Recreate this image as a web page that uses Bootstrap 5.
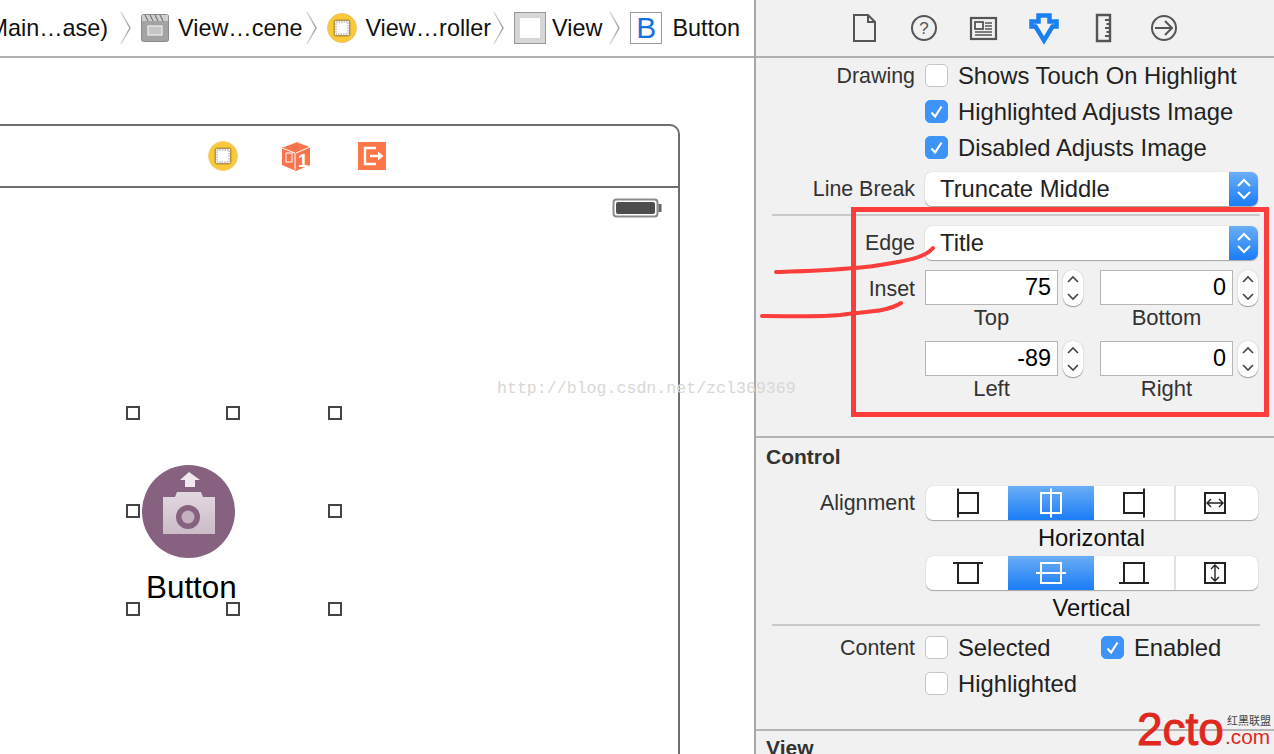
<!doctype html>
<html lang="en">
<head>
<meta charset="utf-8">
<title>Interface Builder</title>
<link href="https://cdn.jsdelivr.net/npm/bootstrap@5.3.0/dist/css/bootstrap.min.css" rel="stylesheet">
<style>
html,body{height:754px;overflow:hidden;background:#fff}
body{font-family:"Liberation Sans",Arial,sans-serif;font-size:21.4px;color:#111;line-height:1.2}
.app{width:1274px;height:754px;position:relative;overflow:hidden}
.designer{width:756px;height:754px;border-right:2px solid #a8a8a8;overflow:hidden;background:#fff;position:relative}
.crumbs{height:58px;border-bottom:2px solid #b0b0b0;padding-right:14px;white-space:nowrap;font-size:23.4px}
.crumbs svg{flex:none}
.crumb-gap{margin:0 10px}
.crumb-icon{margin-right:9px}
.gap-m{margin-left:12px}.gap-s{margin-left:4px}.gap-r{margin-left:2px}.gap-v{margin-left:7px}
.icon-c{margin-right:8px}
.icon-v{margin-right:6px}
.bicon{flex:none;width:32px;height:32px;border:1px solid #9a9a9a;color:#1470e0;font-size:30px;margin-right:10px;line-height:30px;background:#fff}
.scene{width:700px;height:640px;margin:66px 0 0 -20px;border:2px solid #6e6e6e;border-bottom:0;border-radius:0 10px 0 0}
.scene-bar{height:62px;border-bottom:2px solid #6e6e6e;gap:44px;padding-left:226px}
.cube-icon{margin-left:-1px}
.exit-icon{margin-left:3px}
.batt{position:absolute;left:612px;top:198px}
.handle{position:absolute;width:14px;height:14px;border:2px solid #444;background:#fff}
.hx1{left:126px}.hx2{left:226px}.hx3{left:328px}
.hy1{top:406px}.hy2{top:504px}.hy3{top:602px}
.cam{position:absolute;left:142px;top:465px}
.btn-title{position:absolute;left:146px;top:570px;font-size:31.4px;line-height:36px;color:#000}
.inspector{width:518px;height:754px;background:#f1f1f1;color:#333}
.tools{height:58px;border-bottom:2px solid #b0b0b0;padding-left:96px;gap:36px}
.tools svg{flex:none;width:24px;height:30px;overflow:visible}
.prow{display:grid;grid-template-columns:159px 1fr;column-gap:10px;align-items:center}
.prow>label,.plabel{text-align:right;color:#333;white-space:nowrap;padding-top:1px}
.checkline{height:36px}
.prow>label.chk,.chk{display:flex;align-items:center;gap:10px;color:#222;white-space:nowrap;margin:0;font-size:23.8px;text-align:left;padding-top:0}
.chk .form-check-input{width:23px;height:23px;margin:0;border:1px solid #c4c4c4;border-radius:5px;background-color:#fff;flex:none;box-shadow:none;float:none}
.chk .form-check-input:checked{background-color:#3d94f6;border-color:#3d94f6;background-image:url("data:image/svg+xml,%3Csvg xmlns='http://www.w3.org/2000/svg' viewBox='0 0 23 23'%3E%3Cpath d='M6 12.500l4 4.500 7-11' fill='none' stroke='%23fff' stroke-width='2.400'/%3E%3C/svg%3E")}
.popup{height:34px;width:333px;background:#fff;border-radius:7px;box-shadow:0 1px 1px #a5a5a5,0 0 1px #b5b5b5;overflow:hidden;color:#222;padding-left:15px;font-size:23.8px}
.popup-arrows{width:29px;height:34px;background:linear-gradient(#6aaef5,#1a7cf7)}
.rule{height:2px;background:#c9c9c9;margin-left:16px;margin-right:14px}
.line-rule{height:2px;background:#b4b4b4}
.fields .form-control{height:35px;border:1px solid #b5b5b5;border-radius:0;padding:0 6px 0 0;text-align:right;font-size:23.4px;color:#000;background:#fff;box-shadow:none;font-family:inherit}
.fcell{display:flex;gap:5px}
.fcell input{width:133px;flex:none}
.stepper{width:20px;height:36px;flex:none;background:#fff;border-radius:9px;box-shadow:0 1px 1px #999,0 0 1px #aaa}
.sub{text-align:center;width:133px;color:#333;font-size:22px;line-height:24px}
.fieldgrid{display:grid;grid-template-columns:158px 158px;column-gap:17px;width:333px}
.secthead{font-weight:700;font-size:21px;line-height:25px;color:#333;padding-left:10px}
.segs{width:332px;height:34px;margin-left:1px;background:#fff;border-radius:7px;box-shadow:0 1px 1px #a5a5a5,0 0 1px #b5b5b5;overflow:hidden}
.segs .btn{padding:0;border:0;border-radius:0;background:transparent;height:34px;display:flex;align-items:center;justify-content:center;flex:none}
.segs .btn:nth-child(1){width:83px}
.segs .btn:nth-child(2){width:86px;background:linear-gradient(#6aaef5,#1a7cf7)}
.segs .btn:nth-child(3){width:83px;border-right:2px solid #e2e2e2}
.segs .btn:nth-child(4){width:80px}
.caption{width:333px;height:28px;line-height:28px;text-align:center;color:#111;font-size:23.8px;margin-top:4px}
.redbox{position:absolute;left:851px;top:207px;width:418px;height:210px;border:5px solid #fb3d3c;pointer-events:none}
.scribble{position:absolute;left:0;top:0;pointer-events:none}
.wm{position:absolute;left:497px;top:378px;font-family:"Liberation Mono","Courier New",monospace;font-size:16.6px;line-height:22px;color:#d8d8d4;white-space:nowrap}
.logo{position:absolute;left:1132px;top:702px;width:142px;height:52px;color:#e0281f}
.logo-main{position:absolute;left:5px;top:4px;font-family:"Liberation Sans",sans-serif;font-weight:400;font-size:46px;line-height:46px;-webkit-text-stroke:1px #e0281f}
.logo-cn{position:absolute;left:95px;top:13px;font-family:"Noto Sans CJK SC",sans-serif;font-size:11px;line-height:10px;color:#444;white-space:nowrap}
.logo-com{position:absolute;left:93px;top:26px;font-family:"Liberation Sans",sans-serif;font-size:20.8px;line-height:17px;white-space:nowrap}
.edge-row{margin-top:10px}
.break-row{margin-top:6px}
.inset-row{margin-top:10px}
.prow>.inset-label{padding-top:7px}
.mt-row{margin-top:11px}
.section-a{margin-top:35px}
.section-title{margin-top:6px}
.align-row{margin-top:17px}
.seg2-row{margin-top:4px}
.rule-c{margin-top:2px}
.content-row{margin-top:4px}
.content-a{width:176px}
.section-b{margin-top:27px}
.section-view{margin-top:4px}
.defs{position:absolute;width:0;height:0}
</style>
</head>
<body>
<svg class="defs" aria-hidden="true"><defs><linearGradient id="cg" x1="0" y1="0" x2="0" y2="1"><stop offset="0" stop-color="#ddd"/><stop offset=".5" stop-color="#999"/><stop offset="1" stop-color="#ddd"/></linearGradient><linearGradient id="bodyg" x1="0" y1="0" x2="0" y2="1"><stop offset="0" stop-color="#e2d8e0"/><stop offset="1" stop-color="#cbbcc8"/></linearGradient></defs></svg>
<div class="app d-flex">
  <main class="designer flex-shrink-0">
    <div class="crumbs d-flex align-items-center justify-content-end">
      <span>Main…ase)</span>
      <svg class="crumb-gap gap-m" width="11" height="34" viewBox="0 0 11 34"><path d="M1 1 10 17 1 33" fill="none" stroke="url(#cg)" stroke-width="1.400"/></svg>
      <svg class="crumb-icon" width="28" height="28" viewBox="0 0 28 28"><rect x=".5" y=".5" width="27" height="27" rx="2" fill="#a3a3a3" stroke="#8a8a8a"/><rect x="1" y="1" width="26" height="6" fill="#cfcfcf"/><path d="M4 1l3 6M9 1l3 6M14 1l3 6M19 1l3 6" stroke="#777" stroke-width="1.200"/><rect x="7" y="12" width="14" height="9" fill="#c4c4c4" stroke="#eee" stroke-width="1.200"/></svg>
      <span>View…cene</span>
      <svg class="crumb-gap gap-s" width="11" height="34" viewBox="0 0 11 34"><path d="M1 1 10 17 1 33" fill="none" stroke="url(#cg)" stroke-width="1.400"/></svg>
      <svg class="crumb-icon icon-c" width="30" height="30" viewBox="0 0 30 30"><circle cx="15" cy="15" r="14.500" fill="#fbc837" stroke="#eec56a"/><rect x="6.500" y="6.500" width="17" height="17" rx="3" fill="#b2954a"/><rect x="8" y="8" width="14" height="14" fill="#fff"/><rect x="9" y="9" width="12" height="12" fill="none" stroke="#a99" stroke-dasharray="1.500 1"/></svg>
      <span>View…roller</span>
      <svg class="crumb-gap gap-r" width="11" height="34" viewBox="0 0 11 34"><path d="M1 1 10 17 1 33" fill="none" stroke="url(#cg)" stroke-width="1.400"/></svg>
      <svg class="crumb-icon icon-v" width="32" height="32" viewBox="0 0 32 32"><rect x=".5" y=".5" width="31" height="31" fill="#d6d6d6" stroke="#999"/><rect x="6" y="6" width="20" height="20" fill="#fff"/></svg>
      <span>View</span>
      <svg class="crumb-gap gap-v" width="11" height="34" viewBox="0 0 11 34"><path d="M1 1 10 17 1 33" fill="none" stroke="url(#cg)" stroke-width="1.400"/></svg>
      <span class="bicon d-flex align-items-center justify-content-center">B</span>
      <span>Button</span>
    </div>
    <div class="scene">
      <div class="scene-bar d-flex align-items-center">
        <svg width="30" height="30" viewBox="0 0 30 30"><circle cx="15" cy="15" r="14.500" fill="#fbc837" stroke="#f0d080"/><rect x="6.500" y="6.500" width="17" height="17" rx="3" fill="#b2954a"/><rect x="8" y="8" width="14" height="14" fill="#fff"/><rect x="9" y="9" width="12" height="12" fill="none" stroke="#a99" stroke-dasharray="1.500 1"/></svg>
        <svg class="cube-icon" width="30" height="30" viewBox="0 0 30 30"><path d="M15 1 29 6V24L15 30 1 24V6Z" fill="#f9734c"/><path d="M1 7 14 12V29M15 12 29 6M15 1 2 6" fill="none" stroke="#fff" stroke-width="1"/><rect x="5" y="12" width="6" height="9" fill="none" stroke="#fff"/><text x="17" y="26" font-size="18" font-weight="700" fill="#fff" font-family="Liberation Sans, sans-serif">1</text></svg>
        <svg class="exit-icon" width="28" height="28" viewBox="0 0 28 28"><rect width="28" height="28" fill="#fb7748"/><path d="M18 6H7V22H18" fill="none" stroke="#fff" stroke-width="2.400"/><path d="M12 14H21" stroke="#fff" stroke-width="2.400"/><path d="M20 9.500 25.500 14 20 18.500Z" fill="#fff"/></svg>
      </div>
    </div>
    <svg class="batt" width="50" height="20" viewBox="0 0 50 20"><rect x="1.500" y="1.500" width="44" height="17" rx="3" fill="#fff" stroke="#8b8b8b" stroke-width="2"/><rect x="4" y="4" width="39" height="12" rx="2" fill="#4d4d4d"/><rect x="46.500" y="6" width="3" height="8" fill="#666"/></svg>
    <svg class="cam" width="93" height="93" viewBox="0 0 93 93"><circle cx="46.500" cy="46.500" r="46.500" fill="#876280"/><path d="M47 7 58 15H53V22H43V15H38Z" fill="#f1e9ef"/><path d="M21 32H33L35 27H59L61 32H73V69H21Z" fill="url(#bodyg)"/><circle cx="46" cy="52" r="12" fill="#876280"/><circle cx="46" cy="52" r="6.500" fill="#c4b1c0"/></svg>
    <span class="btn-title">Button</span>
    <i class="handle hx1 hy1"></i><i class="handle hx2 hy1"></i><i class="handle hx3 hy1"></i>
    <i class="handle hx1 hy2"></i><i class="handle hx3 hy2"></i>
    <i class="handle hx1 hy3"></i><i class="handle hx2 hy3"></i><i class="handle hx3 hy3"></i>
  </main>

  <aside class="inspector flex-shrink-0">
    <div class="tools d-flex align-items-center">
      <svg viewBox="0 0 24 30"><path d="M2 2H16L23 9V28H2Z M16 2V9H23" fill="none" stroke="#555" stroke-width="2"/></svg>
      <svg viewBox="0 0 24 30"><circle cx="12" cy="15" r="12" fill="none" stroke="#555" stroke-width="2"/><text x="12" y="21" text-anchor="middle" font-size="17" fill="#555" font-family="Liberation Sans, sans-serif">?</text></svg>
      <svg viewBox="0 0 24 30"><rect x="-1" y="5" width="25" height="21" fill="none" stroke="#555" stroke-width="2.200"/><rect x="3" y="9" width="8" height="7" fill="none" stroke="#555" stroke-width="1.800"/><path d="M13 10H20M13 13H20M13 16H20M3 19H20M3 22H20" stroke="#555" stroke-width="1.600"/></svg>
      <svg viewBox="0 0 24 30"><path d="M6.500 2.500H17.500V8.500H24.500V13.500H20.500L12 27.500 3.500 13.500H-.5V8.500H6.500Z" fill="none" stroke="#1a7ff0" stroke-width="4.500" stroke-linejoin="miter"/></svg>
      <svg viewBox="0 0 24 30"><path d="M5 2H18V28H5Z" fill="none" stroke="#555" stroke-width="2.400"/><path d="M13 7H17M14.500 11H17M13 15H17M14.500 19H17M13 23H17" stroke="#555" stroke-width="1.800"/></svg>
      <svg viewBox="0 0 24 30"><circle cx="12" cy="15" r="12" fill="none" stroke="#555" stroke-width="2"/><path d="M3 15H20M13 8 20 15 13 22" fill="none" stroke="#555" stroke-width="2"/></svg>
    </div>

    <div class="prow checkline"><label>Drawing</label><label class="chk"><input class="form-check-input" type="checkbox">Shows Touch On Highlight</label></div>
    <div class="prow checkline"><span></span><label class="chk"><input class="form-check-input" type="checkbox" checked>Highlighted Adjusts Image</label></div>
    <div class="prow checkline"><span></span><label class="chk"><input class="form-check-input" type="checkbox" checked>Disabled Adjusts Image</label></div>
    <div class="prow break-row"><label>Line Break</label><div class="popup d-flex align-items-center justify-content-between"><span>Truncate Middle</span><span class="popup-arrows d-flex align-items-center justify-content-center"><svg width="16" height="24" viewBox="0 0 16 24"><path d="M2 9 8 3 14 9M2 15 8 21 14 15" fill="none" stroke="#fff" stroke-width="2"/></svg></span></div></div>
    <div class="rule mt-2"></div>
    <div class="prow edge-row"><label>Edge</label><div class="popup d-flex align-items-center justify-content-between"><span>Title</span><span class="popup-arrows d-flex align-items-center justify-content-center"><svg width="16" height="24" viewBox="0 0 16 24"><path d="M2 9 8 3 14 9M2 15 8 21 14 15" fill="none" stroke="#fff" stroke-width="2"/></svg></span></div></div>
    <div class="prow inset-row align-items-start">
      <label class="inset-label">Inset</label>
      <div class="fieldgrid">
        <div><div class="fcell fields"><input class="form-control" value="75"><span class="stepper d-flex"><svg width="20" height="36" viewBox="0 0 20 36"><path d="M5 12 10 7 15 12M5 24 10 29 15 24" fill="none" stroke="#444" stroke-width="1.600"/></svg></span></div><div class="sub">Top</div></div>
        <div><div class="fcell fields"><input class="form-control" value="0"><span class="stepper d-flex"><svg width="20" height="36" viewBox="0 0 20 36"><path d="M5 12 10 7 15 12M5 24 10 29 15 24" fill="none" stroke="#444" stroke-width="1.600"/></svg></span></div><div class="sub">Bottom</div></div>
        <div class="mt-row"><div class="fcell fields"><input class="form-control" value="-89"><span class="stepper d-flex"><svg width="20" height="36" viewBox="0 0 20 36"><path d="M5 12 10 7 15 12M5 24 10 29 15 24" fill="none" stroke="#444" stroke-width="1.600"/></svg></span></div><div class="sub">Left</div></div>
        <div class="mt-row"><div class="fcell fields"><input class="form-control" value="0"><span class="stepper d-flex"><svg width="20" height="36" viewBox="0 0 20 36"><path d="M5 12 10 7 15 12M5 24 10 29 15 24" fill="none" stroke="#444" stroke-width="1.600"/></svg></span></div><div class="sub">Right</div></div>
      </div>
    </div>
    <div class="line-rule section-a"></div>
    <div class="secthead section-title">Control</div>
    <div class="prow align-row"><label>Alignment</label>
      <div class="btn-group segs" role="group">
        <button class="btn" type="button"><svg width="30" height="30" viewBox="0 0 30 30"><path d="M6 5H25V25H6M5 .5V29.500" fill="none" stroke="#222" stroke-width="2"/></svg></button>
        <button class="btn" type="button"><svg width="30" height="30" viewBox="0 0 30 30"><path d="M5 5H25V25H5ZM15 .5V29.500" fill="none" stroke="#fff" stroke-width="2"/></svg></button>
        <button class="btn" type="button"><svg width="30" height="30" viewBox="0 0 30 30"><path d="M24 5H5V25H24M25 .5V29.500" fill="none" stroke="#222" stroke-width="2"/></svg></button>
        <button class="btn" type="button"><svg width="30" height="30" viewBox="0 0 30 30"><path d="M5 5H25V25H5Z" fill="none" stroke="#222" stroke-width="2"/><path d="M7 15H23M11 11 7 15 11 19M19 11 23 15 19 19" fill="none" stroke="#222" stroke-width="1.400"/></svg></button>
      </div>
    </div>
    <div class="prow"><span></span><div class="caption">Horizontal</div></div>
    <div class="prow seg2-row"><span></span>
      <div class="btn-group segs" role="group">
        <button class="btn" type="button"><svg width="30" height="30" viewBox="0 0 30 30"><path d="M5 6V25H25V6M0 5H30" fill="none" stroke="#222" stroke-width="2"/></svg></button>
        <button class="btn" type="button"><svg width="30" height="30" viewBox="0 0 30 30"><path d="M5 5H25V25H5ZM0 15H30" fill="none" stroke="#fff" stroke-width="2"/></svg></button>
        <button class="btn" type="button"><svg width="30" height="30" viewBox="0 0 30 30"><path d="M5 24V5H25V24M0 25H30" fill="none" stroke="#222" stroke-width="2"/></svg></button>
        <button class="btn" type="button"><svg width="30" height="30" viewBox="0 0 30 30"><path d="M5 5H25V25H5Z" fill="none" stroke="#222" stroke-width="2"/><path d="M15 7V23M11 11 15 7 19 11M11 19 15 23 19 19" fill="none" stroke="#222" stroke-width="1.400"/></svg></button>
      </div>
    </div>
    <div class="prow"><span></span><div class="caption">Vertical</div></div>
    <div class="rule rule-c"></div>
    <div class="prow checkline content-row"><label>Content</label><div class="d-flex"><label class="chk content-a"><input class="form-check-input" type="checkbox">Selected</label><label class="chk"><input class="form-check-input" type="checkbox" checked>Enabled</label></div></div>
    <div class="prow checkline"><span></span><label class="chk"><input class="form-check-input" type="checkbox">Highlighted</label></div>
    <div class="line-rule section-b"></div>
    <div class="secthead section-view">View</div>
  </aside>

  <div class="redbox"></div>
  <svg class="scribble" width="1274" height="754" viewBox="0 0 1274 754"><path d="M776 272C810 271 850 270 880 265 905 261 925 258 933 248" fill="none" stroke="#fb3d3c" stroke-width="4" stroke-linecap="round"/><path d="M762 316C790 316 820 317 840 315 865 311 885 313 901 303" fill="none" stroke="#fb3d3c" stroke-width="4" stroke-linecap="round"/></svg>
  <div class="wm">http://blog.csdn.net/zcl369369</div>
  <div class="logo">
    <span class="logo-main">2cto</span>
    <span class="logo-cn">红黑联盟</span>
    <span class="logo-com">.com</span>
  </div>
</div>
<script src="https://cdn.jsdelivr.net/npm/bootstrap@5.3.0/dist/js/bootstrap.bundle.min.js"></script>
</body>
</html>
